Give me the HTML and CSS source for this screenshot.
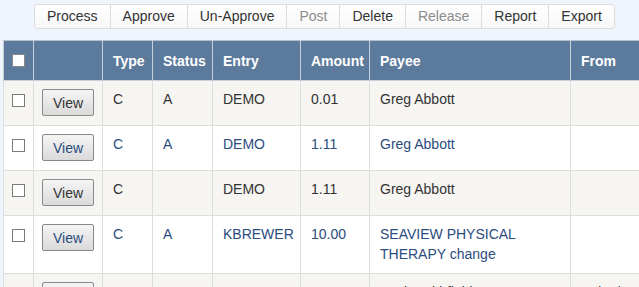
FILE: index.html
```html
<!DOCTYPE html>
<html lang="en">
<head>
    <meta charset="UTF-8">
    <title>Checks</title>
    <link rel="stylesheet" href="styles.css">
</head>
<body>
    <!-- Action buttons -->
    <div class="toolbar">
        <div class="btn-group">
            <button class="tool-btn">Process</button>
            <button class="tool-btn">Approve</button>
            <button class="tool-btn">Un-Approve</button>
            <button class="tool-btn disabled">Post</button>
            <button class="tool-btn">Delete</button>
            <button class="tool-btn disabled">Release</button>
            <button class="tool-btn">Report</button>
            <button class="tool-btn">Export</button>
        </div>
    </div>

    <!-- Check list -->
    <table class="grid">
        <colgroup>
            <col class="c-check">
            <col class="c-view">
            <col class="c-type">
            <col class="c-status">
            <col class="c-entry">
            <col class="c-amount">
            <col class="c-payee">
            <col class="c-from">
        </colgroup>
        <thead>
            <tr>
                <th class="chk"><input type="checkbox" class="box"></th>
                <th></th>
                <th>Type</th>
                <th>Status</th>
                <th>Entry</th>
                <th>Amount</th>
                <th>Payee</th>
                <th>From</th>
            </tr>
        </thead>
        <tbody>
            <tr class="odd">
                <td class="chk"><input type="checkbox" class="box"></td>
                <td><button class="view-btn">View</button></td>
                <td>C</td>
                <td>A</td>
                <td>DEMO</td>
                <td>0.01</td>
                <td>Greg Abbott</td>
                <td></td>
            </tr>
            <tr class="even">
                <td class="chk"><input type="checkbox" class="box"></td>
                <td><button class="view-btn">View</button></td>
                <td>C</td>
                <td>A</td>
                <td>DEMO</td>
                <td>1.11</td>
                <td>Greg Abbott</td>
                <td></td>
            </tr>
            <tr class="odd">
                <td class="chk"><input type="checkbox" class="box"></td>
                <td><button class="view-btn">View</button></td>
                <td>C</td>
                <td></td>
                <td>DEMO</td>
                <td>1.11</td>
                <td>Greg Abbott</td>
                <td></td>
            </tr>
            <tr class="even">
                <td class="chk"><input type="checkbox" class="box"></td>
                <td><button class="view-btn">View</button></td>
                <td>C</td>
                <td>A</td>
                <td>KBREWER</td>
                <td>10.00</td>
                <td>SEAVIEW PHYSICAL THERAPY change</td>
                <td></td>
            </tr>
            <tr class="odd">
                <td class="chk"><input type="checkbox" class="box"></td>
                <td><button class="view-btn">View</button></td>
                <td>C</td>
                <td>A</td>
                <td>DEMO</td>
                <td>1.11</td>
                <td>Terri Smithfield</td>
                <td>09/05/2016</td>
            </tr>
        </tbody>
    </table>
</body>
</html>
```

FILE: styles.css
```css
html, body {
    overflow: hidden;
}

body {
    font-family: "Liberation Sans", Arial, sans-serif;
    font-size: 14px;
    line-height: 20px;
    color: #333;
    margin: 0;
    padding: 0 0 0 3px;
    background-color: #eef5fc;
}

/* toolbar */
.toolbar {
    padding: 4px 0 0 31px;
    height: 40px;
    box-sizing: border-box;
}

.btn-group {
    display: inline-flex;
    border: 1px solid #dcdcdc;
    border-radius: 4px;
    background-color: #fcfcfc;
}

.tool-btn {
    font-family: inherit;
    font-size: 14px;
    line-height: 23px;
    height: 23px;
    padding: 0 12px;
    margin: 0;
    border: none;
    border-left: 1px solid #dcdcdc;
    background: linear-gradient(#ffffff, #f7f7f7);
    color: #333;
    cursor: pointer;
}

.tool-btn:first-child {
    border-left: none;
    border-radius: 4px 0 0 4px;
}

.tool-btn:last-child {
    border-radius: 0 4px 4px 0;
}

.tool-btn.disabled {
    color: #8c8c8c;
}

/* grid */
.grid {
    border-collapse: collapse;
    table-layout: fixed;
    width: 700px;
    border-left: 1px solid #cfd4d9;
}

.c-check { width: 30px; }
.c-view { width: 69px; }
.c-type { width: 50px; }
.c-status { width: 60px; }
.c-entry { width: 88px; }
.c-amount { width: 69px; }
.c-payee { width: 201px; }
.c-from { width: 133px; }

.grid th {
    background-color: #5b7a9c;
    color: #fff;
    font-weight: bold;
    text-align: left;
    height: 40px;
    box-sizing: border-box;
    padding: 0 10px;
    border: 1px solid #c9cfd6;
    border-top-color: #b8bec5;
    white-space: nowrap;
}

.grid td {
    vertical-align: top;
    padding: 8px 10px 9px;
    border: 1px solid #dcdcdc;
}

.grid th.chk, .grid td.chk {
    padding-left: 8px;
    padding-right: 0;
}

.grid td.chk {
    padding-top: 13px;
}

tr.odd {
    background-color: #f6f5f1;
}

tr.even {
    background-color: #fff;
    color: #2b4c7e;
}

.box {
    appearance: none;
    -webkit-appearance: none;
    display: block;
    width: 13px;
    height: 13px;
    margin: 0;
    border: 1px solid #7a7a7a;
    background-color: #fff;
    box-sizing: border-box;
}

th .box {
    border-color: #888;
}

.view-btn {
    display: block;
    width: 52px;
    height: 27px;
    margin: 0 0 0 -2px;
    padding: 0;
    font-family: inherit;
    font-size: 14px;
    color: inherit;
    border: 1px solid #888;
    border-radius: 2px;
    background: linear-gradient(#f5f5f5, #dadada);
    cursor: pointer;
}
```
